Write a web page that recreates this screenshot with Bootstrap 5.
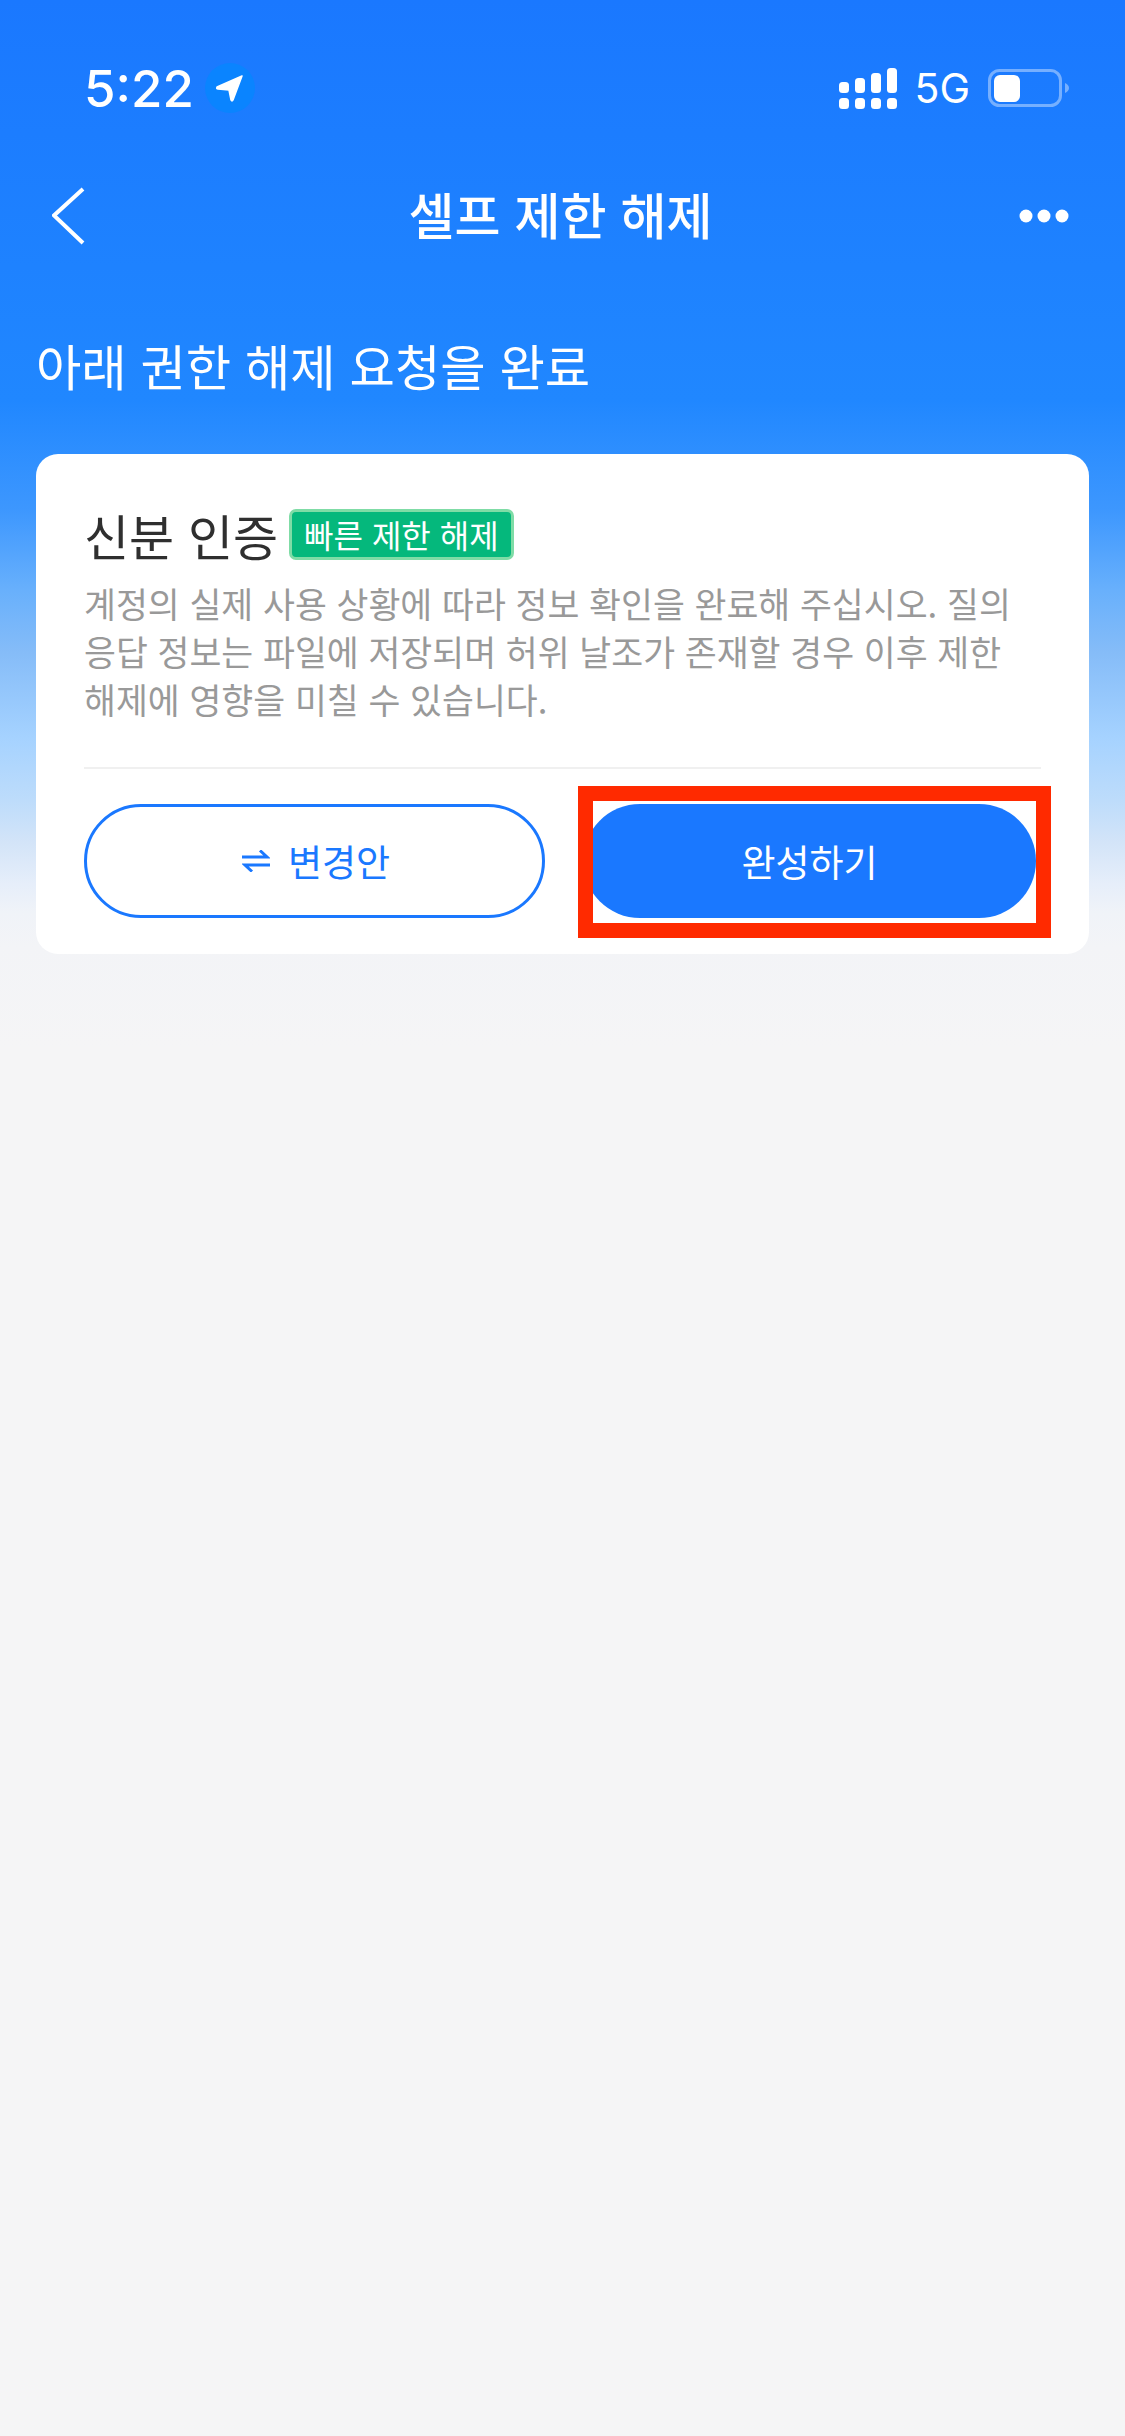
<!DOCTYPE html>
<html lang="ko">
<head>
  <meta charset="UTF-8">
  <title>셀프 제한 해제</title>
  <meta name="viewport" content="width=device-width, initial-scale=1">
  <link href="https://cdn.jsdelivr.net/npm/bootstrap@5.3.0/dist/css/bootstrap.min.css" rel="stylesheet">
  <style>
    body {
      background: #f5f5f6;
      font-family: "Noto Sans CJK KR", "Noto Sans", sans-serif;
    }
    .screen {
      min-height: 2436px;
      background: linear-gradient(180deg, #1a78ff 0, #2087ff 400px, #3d97fe 510px, #68b0fc 590px, #85bcf8 652px, #a5d2ff 737px, #bddcfb 800px, #d3e4f8 842px, #e6eefa 884px, #f0f3f8 913px, #f3f4f7 947px, #f5f5f6 1048px);
    }
    .status-row { height: 176px; padding: 0 56px 0 84px; }
    .clock { font-family: Inter, sans-serif; font-size: 51px; font-weight: 500; color: #fff; line-height: 1; }
    .loc-dot { width: 50px; height: 50px; border-radius: 50%; background: #0a84ff; margin-left: 11px; }
    .net-label { font-family: Inter, sans-serif; font-size: 41px; color: #fff; line-height: 1; margin: 0 18px 0 17px; }
    .nav-row { height: 80px; padding: 0 56px 0 52px; }
    .nav-side { flex: 0 0 90px; }
    .nav-title { font-size: 50px; font-weight: 500; color: #fff; line-height: 1; margin-bottom: 6px; }
    .top-text { font-size: 49.3px; font-weight: 400; color: #fff; line-height: 1; margin: 84px 0 0 36px; }
    .task-card { margin: 65px 36px 0; border: 0; border-radius: 22px; padding: 55px 48px 36px; }
    .task-title { font-size: 49px; font-weight: 400; color: #2f2f2f; line-height: 1; }
    .fast-tag { background: #05b87c; border: 3px solid #7fdca6; border-radius: 7px; color: #fff; font-size: 32px; line-height: 45px; padding: 0 12px; margin-left: 11px; }
    .task-desc { font-size: 34.7px; line-height: 48px; color: #999; margin: 19px 0 0; }
    .task-line { border-top: 2px solid #f0f0f0; margin: 44px 0 0; opacity: 1; }
    .task-actions { margin-top: 35px; gap: 38px; }
    .act-btn { height: 114px; border-radius: 57px; font-size: 37px; font-weight: 400; line-height: 1; }
    .act-alt { flex: 0 0 461px; border: 3px solid #1a78ff; background: #fff; color: #1a78ff; gap: 18px; padding-left: 15px; }
    .act-main { border: 0; background: #1a78ff; color: #fff; }
    .act-wrap { flex: 0 0 453px; }
    .red-mark { position: absolute; top: -18px; bottom: -20px; left: -5px; right: -15px; border: 15px solid #ff2a00; pointer-events: none; }
  </style>
</head>
<body>
  <div class="screen">

    <!-- barra de status -->
    <div class="status-row d-flex align-items-center justify-content-between">
      <div class="d-flex align-items-center">
        <span class="clock">5:22</span>
        <span class="loc-dot d-flex align-items-center justify-content-center">
          <svg width="30" height="30" viewBox="0 0 30 30"><path d="M27 3 L2 14 Q1 16 3 16 L14 17 L16 27 Q17 29 18 27 Z" fill="#fff" stroke="#fff" stroke-width="1.5" stroke-linejoin="round"/></svg>
        </span>
      </div>
      <div class="d-flex align-items-center">
        <svg width="58" height="41" viewBox="0 0 58 41" fill="#fff">
          <rect x="0" y="14" width="10" height="11" rx="3.5"/>
          <rect x="16" y="10" width="10" height="15" rx="3.5"/>
          <rect x="32" y="5" width="10" height="20" rx="3.5"/>
          <rect x="48" y="0" width="10" height="25" rx="3.5"/>
          <rect x="0" y="30" width="10" height="11" rx="3.5"/>
          <rect x="16" y="30" width="10" height="11" rx="3.5"/>
          <rect x="32" y="30" width="10" height="11" rx="3.5"/>
          <rect x="48" y="30" width="10" height="11" rx="3.5"/>
        </svg>
        <span class="net-label">5G</span>
        <svg width="81" height="38" viewBox="0 0 81 38">
          <rect x="1.5" y="1.5" width="71" height="35" rx="10" fill="none" stroke="#fff" stroke-opacity="0.4" stroke-width="3"/>
          <rect x="6" y="6" width="26" height="27" rx="6" fill="#fff"/>
          <path d="M77 14 q4 2 4 5 t-4 5 Z" fill="#fff" fill-opacity="0.4"/>
        </svg>
      </div>
    </div>

    <!-- navegacao -->
    <div class="nav-row d-flex align-items-center justify-content-between">
      <div class="nav-side d-flex">
        <svg width="34" height="58" viewBox="0 0 34 58"><path d="M31 2 L2 28.500 L31 56" fill="none" stroke="#fff" stroke-width="4"/></svg>
      </div>
      <span class="nav-title">셀프 제한 해제</span>
      <div class="nav-side d-flex justify-content-end">
        <svg width="50" height="14" viewBox="0 0 50 14" fill="#fff"><circle cx="7" cy="7" r="6.500"/><circle cx="25" cy="7" r="6.500"/><circle cx="43" cy="7" r="6.500"/></svg>
      </div>
    </div>

    <div class="top-text">아래 권한 해제 요청을 완료</div>

    <div class="card task-card">
      <div class="d-flex align-items-center">
        <span class="task-title">신분 인증</span>
        <span class="fast-tag">빠른 제한 해제</span>
      </div>
      <p class="task-desc">계정의 실제 사용 상황에 따라 정보 확인을 완료해 주십시오. 질의 응답 정보는 파일에 저장되며 허위 날조가 존재할 경우 이후 제한 해제에 영향을 미칠 수 있습니다.</p>
      <hr class="task-line">
      <div class="task-actions d-flex">
        <button class="btn act-btn act-alt d-flex align-items-center justify-content-center">
          <svg width="28" height="22" viewBox="0 0 28 22" fill="none" stroke="#1a78ff" stroke-width="3"><path d="M0 7 H25 L18 0.500"/><path d="M28 15 H3 L10 21.500"/></svg>
          변경안
        </button>
        <div class="act-wrap position-relative">
          <button class="btn act-btn act-main w-100">완성하기</button>
          <div class="red-mark"></div>
        </div>
      </div>
    </div>

  </div>
  <script src="https://cdn.jsdelivr.net/npm/bootstrap@5.3.0/dist/js/bootstrap.bundle.min.js"></script>
</body>
</html>
